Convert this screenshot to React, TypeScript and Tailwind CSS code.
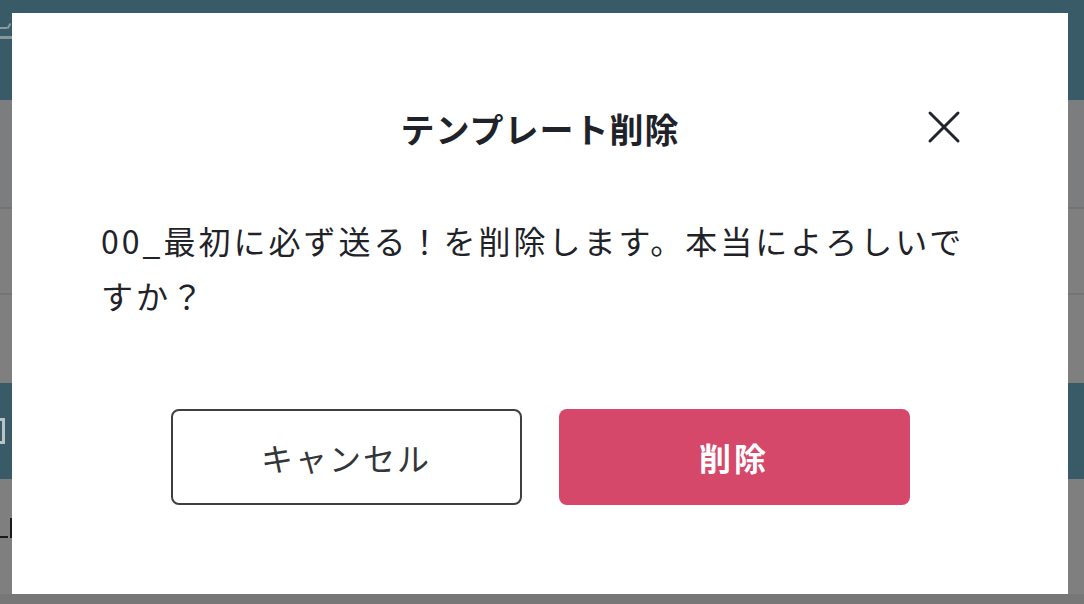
import React from "react";

export default function App() {
  const font = { fontFamily: '"Noto Sans CJK JP", "Noto Sans", sans-serif' };
  return (
    <div className="relative h-[604px] w-full overflow-hidden bg-[#7f7f7f]" style={font}>
      {/* dimmed background page */}
      <div className="flex flex-col">
        <div className="h-[100px] bg-[#385b67] flex flex-col pt-[23px]">
          <div className="flex items-end gap-[1px]">
            <div className="h-[2px] w-[7px] bg-[#8c9ba0]" />
            <div className="h-[6px] w-[2px] rotate-[30deg] bg-[#8c9ba0]" />
          </div>
          <div className="mt-[7px] h-[3px] w-[12px] bg-[#8a969a]" />
        </div>
        <div className="h-[107px] bg-[#7c7d7f]" />
        <div className="h-[2px] bg-[#737373]" />
        <div className="h-[84px] bg-[#7f7f7f]" />
        <div className="h-[2px] bg-[#747474]" />
        <div className="h-[88px] bg-[#7f7f7f]" />
        <div className="h-[96px] bg-[#385b67] flex items-center">
          <div className="h-[26px] w-[5px] border-r-[3px] border-y-[3px] border-[#b8c3c6]" />
        </div>
        <div className="h-[115px] bg-[#7f7f7f] flex items-end pb-[56px]">
          <div className="h-[2px] w-[8px] bg-[#1a1a1a]" />
          <div className="ml-[2px] h-[20px] w-[2px] bg-[#1a1a1a]" />
        </div>
        <div className="h-[10px] bg-[#777777]" />
      </div>

      {/* modal */}
      <div className="absolute left-[12px] top-[13px] h-[581px] w-[1056px] bg-white">
        <div className="relative flex flex-col px-[89px] pt-[92px]">
          <div className="flex h-[48px] items-center justify-center text-[34px] font-bold leading-[48px] tracking-[1px] text-[#1f2329]">
            テンプレート削除
          </div>
          <button className="absolute left-[912px] top-[94px] flex h-[40px] w-[40px] items-center justify-center">
            <svg width="34" height="34" viewBox="0 0 34 34" fill="none" stroke="#1f2430" strokeWidth="3" strokeLinecap="round">
              <path d="M3 3 L31 31 M31 3 L3 31" />
            </svg>
          </button>
          <p className="mt-[60px] text-[32px] leading-[55px] tracking-[3px] text-[#1f2329]">
            00_最初に必ず送る！を削除します。本当によろしいですか？
          </p>
          <div className="mt-[86px] flex justify-center gap-[37px]">
            <button className="flex h-[96px] w-[351px] items-center justify-center rounded-[8px] border-2 border-[#3d4043] bg-white text-[32px] tracking-[2px] text-[#333639]">
              キャンセル
            </button>
            <button className="flex h-[96px] w-[351px] items-center justify-center rounded-[8px] bg-[#d6486a] text-[32px] font-bold tracking-[3px] text-white">
              削除
            </button>
          </div>
        </div>
      </div>
    </div>
  );
}
